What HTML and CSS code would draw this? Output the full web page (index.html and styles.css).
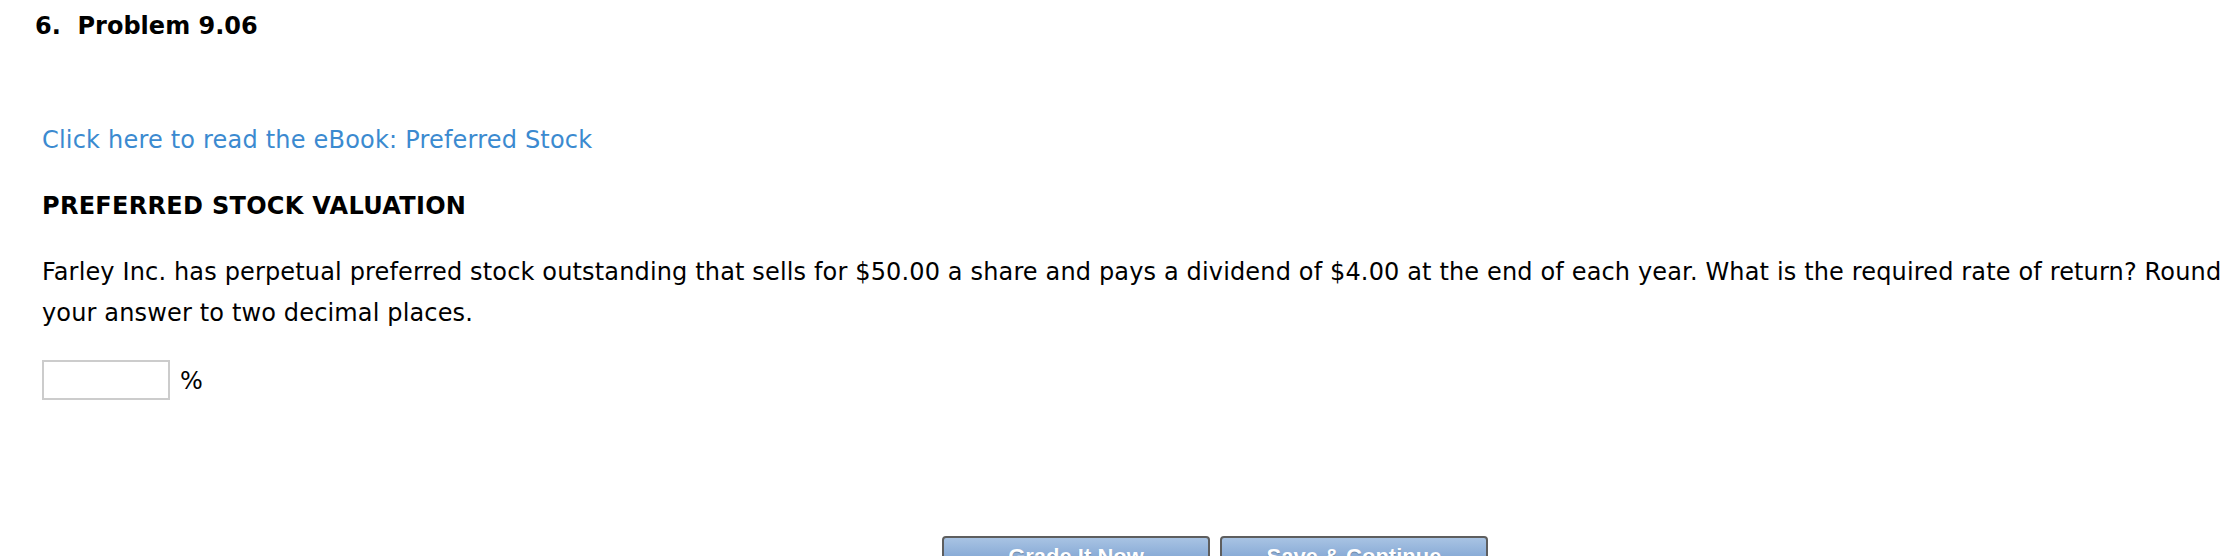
FILE: index.html
```html
<!DOCTYPE html>
<html lang="en">
<head>
<meta charset="utf-8">
<title>Problem 9.06</title>
<link rel="stylesheet" href="styles.css">
</head>
<body>
<div class="page">
  <h1 class="q-title">6.&nbsp; Problem 9.06</h1>
  <div class="q-body">
    <a class="ebook-link" href="#">Click here to read the eBook: Preferred Stock</a>
    <h2 class="section-title">PREFERRED STOCK VALUATION</h2>
    <p class="prompt">Farley Inc. has perpetual preferred stock outstanding that sells for $50.00 a share and pays a dividend of $4.00 at the end of each year. What is the required rate of return? Round your answer to two decimal places.</p>
    <div class="answer-row">
      <input class="answer-input" type="text" aria-label="answer">
      <span class="unit">%</span>
    </div>
  </div>
  <div class="actions">
    <button class="btn" type="button">Grade It Now</button>
    <button class="btn" type="button">Save &amp; Continue</button>
  </div>
</div>
</body>
</html>
```

FILE: styles.css
```css
html, body {
  margin: 0;
  padding: 0;
  background: #ffffff;
}

body {
  font-family: "DejaVu Sans", Verdana, sans-serif;
  color: #000000;
  overflow: hidden;
}

.page {
  display: flex;
  flex-direction: column;
}

.q-title {
  margin: 12px 0 0 35px;
  font-size: 24px;
  line-height: 28px;
  font-weight: bold;
}

.q-body {
  display: flex;
  flex-direction: column;
  align-items: flex-start;
  padding: 0 0 0 42px;
}

.ebook-link {
  margin-top: 86px;
  font-size: 24px;
  line-height: 28px;
  letter-spacing: 0.2px;
  color: #3b8ad0;
  text-decoration: none;
}

.section-title {
  margin: 38px 0 0 0;
  font-size: 24px;
  line-height: 28px;
  letter-spacing: 0.3px;
  font-weight: bold;
}

.prompt {
  margin: 32px 0 0 0;
  font-size: 24px;
  line-height: 41px;
  letter-spacing: 0.15px;
}

.answer-row {
  margin-top: 26px;
  display: flex;
  align-items: center;
  gap: 10px;
}

.answer-input {
  box-sizing: border-box;
  width: 128px;
  height: 40px;
  margin: 0;
  border: 2px solid #cccccc;
  background: #ffffff;
  padding: 0 6px;
  font-size: 22px;
}

.unit {
  font-size: 24px;
  line-height: 28px;
  padding-top: 2px;
}

.actions {
  display: flex;
  gap: 10px;
  padding-left: 942px;
  margin-top: 136px;
}

.btn {
  box-sizing: border-box;
  width: 268px;
  height: 46px;
  border: 2px solid #5e5e5e;
  border-radius: 4px;
  background: linear-gradient(#a8c3e3, #7ea3d2 60%, #6f96c8);
  color: #ffffff;
  font-family: "Liberation Sans", Arial, sans-serif;
  font-weight: bold;
  font-size: 22px;
  padding: 6px 0 0 0;
  text-shadow: 0 1px 1px rgba(0, 0, 0, 0.25);
  display: flex;
  justify-content: center;
  align-items: flex-start;
}
```
